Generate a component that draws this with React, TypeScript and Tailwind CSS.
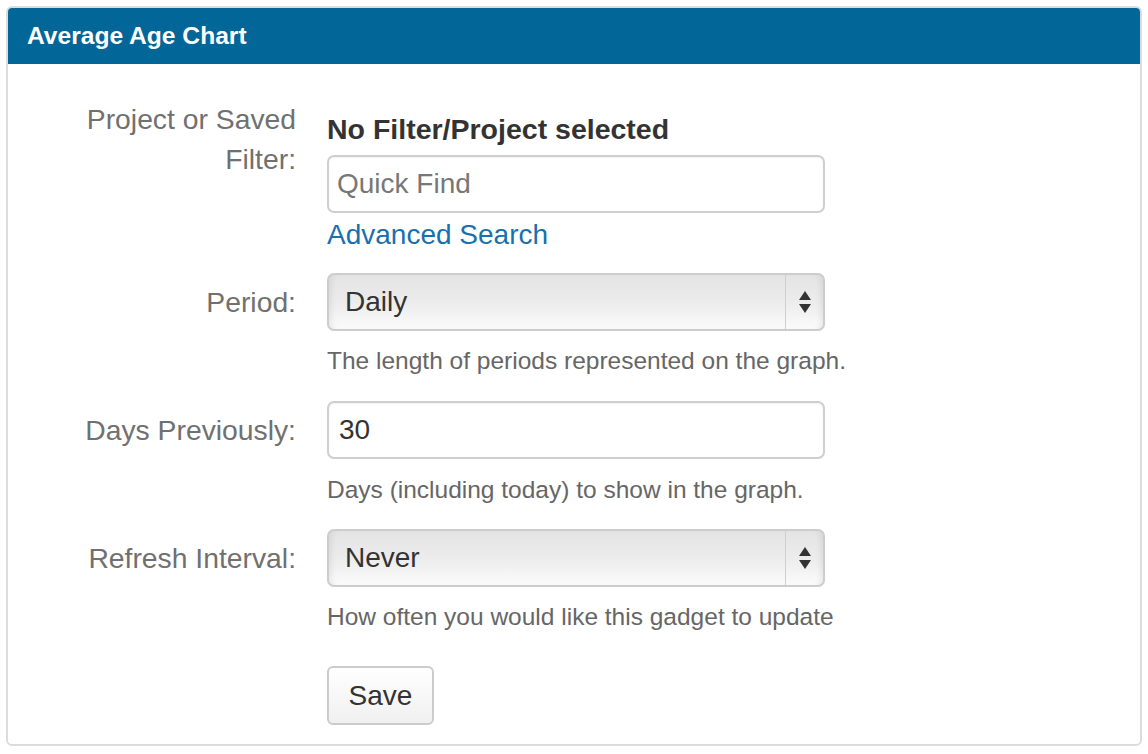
import React from "react";

const font = { fontFamily: '"Liberation Sans", Arial, Helvetica, sans-serif' };

function SelectBox({ value }: { value: string }) {
  return (
    <div className="relative flex h-[58px] w-[498px] items-center rounded-[7px] border-2 border-[#cdcdcd] bg-gradient-to-b from-[#e4e4e4] via-[#ececec] to-[#fbfbfb] shadow-[inset_6px_0_6px_-4px_rgba(0,0,0,0.08),inset_-6px_0_6px_-4px_rgba(0,0,0,0.08)]">
      <span className="flex-1 pl-[16px] text-[28px] leading-[40px] text-[#333333]">{value}</span>
      <div className="flex h-full w-[38px] items-center justify-center border-l border-[#cfcfcf]">
        <svg width="14" height="26" viewBox="0 0 14 26">
          <path d="M7 2 L13 11 L1 11 Z" fill="#333" />
          <path d="M1 15 L13 15 L7 24 Z" fill="#333" />
        </svg>
      </div>
    </div>
  );
}

function TextBox({ value, placeholder }: { value?: string; placeholder?: string }) {
  return (
    <div className="flex h-[58px] w-[498px] items-center rounded-[7px] border-2 border-[#cfcfcf] bg-white shadow-[inset_0_1px_2px_rgba(0,0,0,0.06)]">
      {value ? (
        <span className="pl-[10px] text-[28px] leading-[40px] text-[#333333]">{value}</span>
      ) : (
        <span className="pl-[8px] text-[28px] leading-[40px] text-[#777777]">{placeholder}</span>
      )}
    </div>
  );
}

function Label({ children, pt = 9 }: { children: React.ReactNode; pt?: number }) {
  return (
    <div
      className={`w-[288px] shrink-0 text-right text-[28.3px] leading-[40px] text-[#707070] ${pt === 9 ? "pt-[9px]" : "pt-0"}`}
    >
      {children}
    </div>
  );
}

export default function App() {
  return (
    <div className="h-[754px] w-[1148px] bg-white pt-[6px]" style={font}>
      <div className="mx-[6px] overflow-hidden rounded-[6px] border-2 border-[#dcdcdc] bg-white">
        <div className="flex h-[56px] items-center bg-[#036699] pl-[19px]">
          <span className="text-[24.6px] font-bold leading-none text-white">Average Age Chart</span>
        </div>
        <div className="pb-[19px] pt-[35px]">
          {/* Project or Saved Filter */}
          <div className="flex">
            <Label pt={0}>
              Project or Saved
              <br />
              Filter:
            </Label>
            <div className="ml-[31px] flex flex-col">
              <div className="mt-[10px] text-[28.5px] font-bold leading-[40px] text-[#333333]">
                No Filter/Project selected
              </div>
              <div className="mt-[6px]">
                <TextBox placeholder="Quick Find" />
              </div>
              <a className="mt-[2px] text-[28px] leading-[40px] text-[#1a6fae]" href="#">
                Advanced Search
              </a>
            </div>
          </div>

          {/* Period */}
          <div className="mt-[18px] flex">
            <Label>Period:</Label>
            <div className="ml-[31px] flex flex-col">
              <SelectBox value="Daily" />
              <div className="mt-[14px] text-[24.5px] leading-[32px] text-[#666666]">
                The length of periods represented on the graph.
              </div>
            </div>
          </div>

          {/* Days Previously */}
          <div className="mt-[24px] flex">
            <Label>Days Previously:</Label>
            <div className="ml-[31px] flex flex-col">
              <TextBox value="30" />
              <div className="mt-[15px] text-[24.5px] leading-[32px] text-[#666666]">
                Days (including today) to show in the graph.
              </div>
            </div>
          </div>

          {/* Refresh Interval */}
          <div className="mt-[23px] flex">
            <Label>Refresh Interval:</Label>
            <div className="ml-[31px] flex flex-col">
              <SelectBox value="Never" />
              <div className="mt-[14px] text-[24.5px] leading-[32px] text-[#666666]">
                How often you would like this gadget to update
              </div>
            </div>
          </div>

          {/* Save */}
          <div className="mt-[33px] flex">
            <div className="w-[288px] shrink-0" />
            <div className="ml-[31px]">
              <button className="h-[59px] w-[107px] rounded-[6px] border-2 border-[#cccccc] bg-gradient-to-b from-[#ffffff] to-[#f0f0f0] text-[28px] leading-[40px] text-[#333333]">
                Save
              </button>
            </div>
          </div>
        </div>
      </div>
    </div>
  );
}
